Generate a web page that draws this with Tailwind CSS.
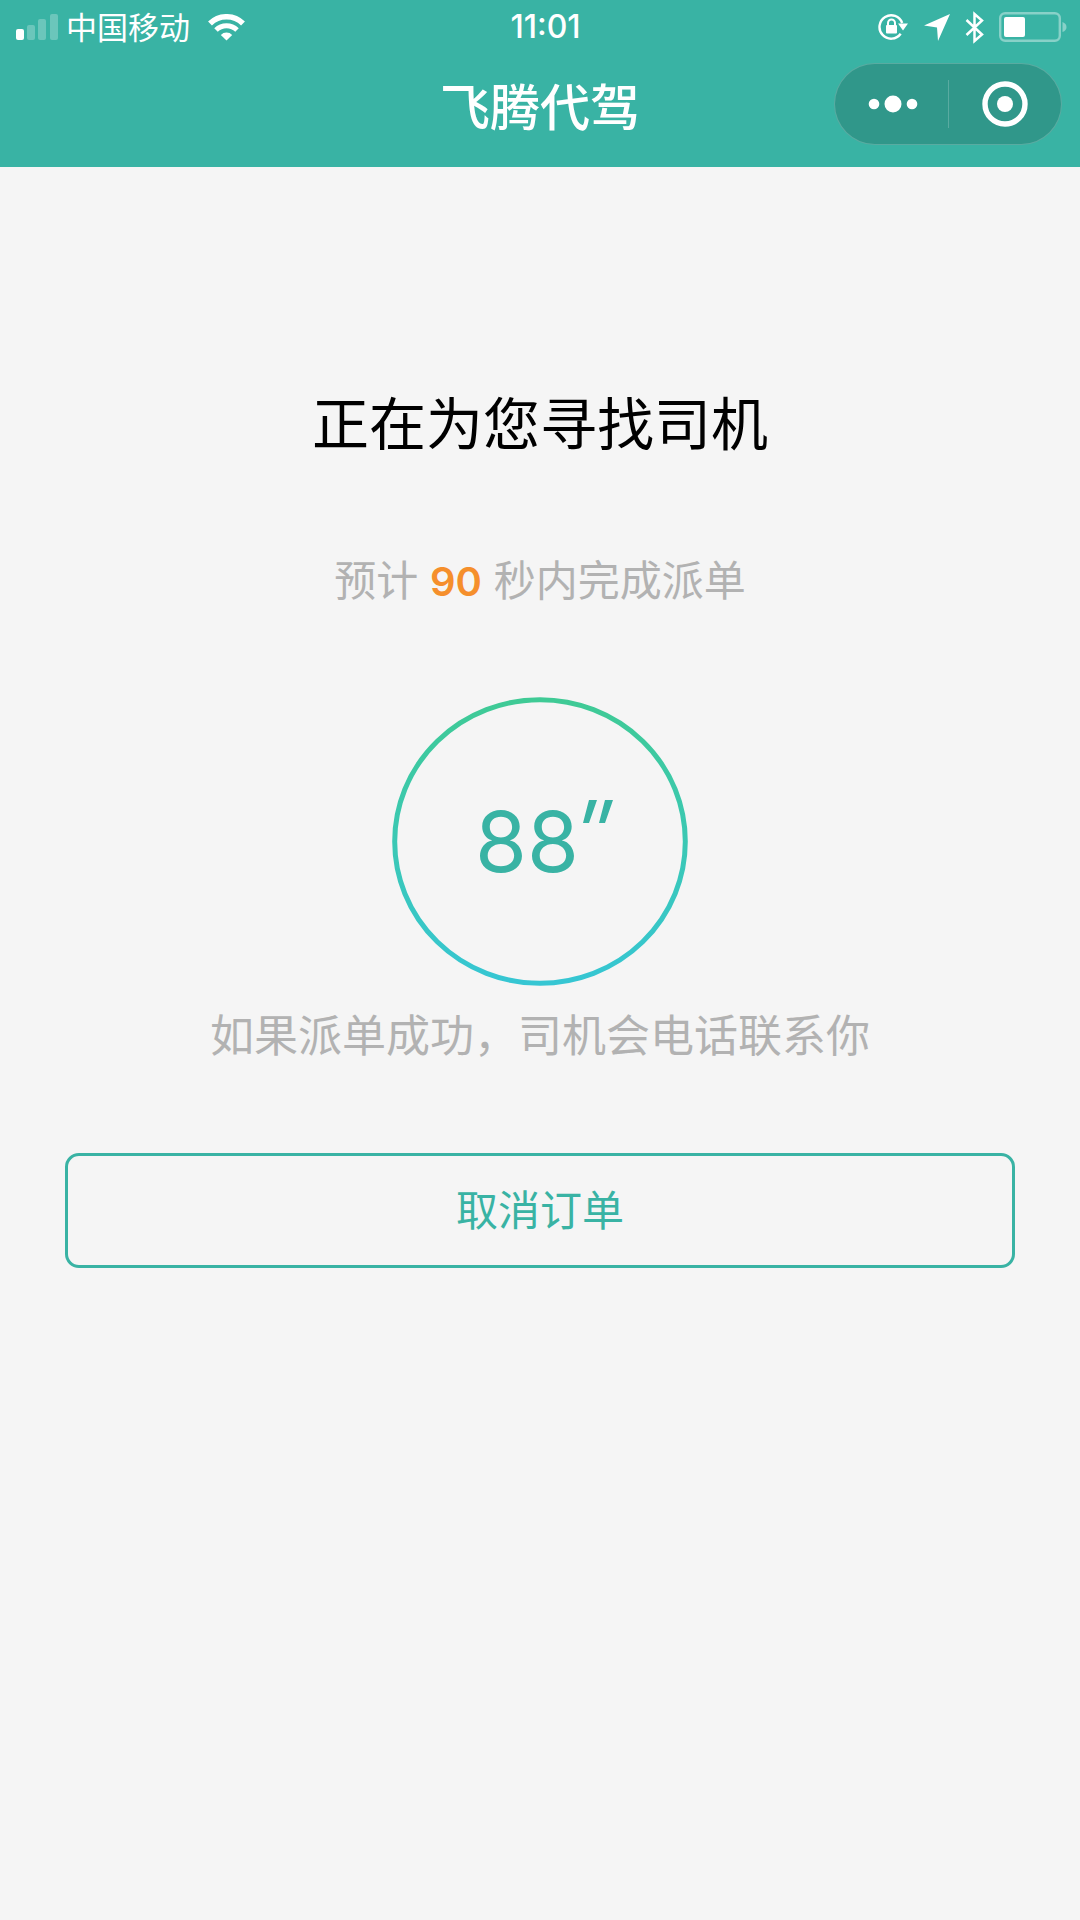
<!DOCTYPE html>
<html lang="zh-CN">
<head>
    <meta charset="UTF-8">
    <meta name="viewport" content="width=device-width, initial-scale=1.0">
    <title>飞腾代驾</title>
    <script src="https://cdn.jsdelivr.net/npm/@tailwindcss/browser@4"></script>
</head>
<body class="min-h-screen bg-[#f5f5f5] font-['Inter','Noto_Sans_CJK_SC',sans-serif]">

    <header class="bg-[#39b3a4] text-white pb-[22px]">
        <!-- Status bar -->
        <div class="grid grid-cols-3 items-center h-[54px] pl-4 pr-[13px]">
            <div class="flex items-center">
                <svg class="w-[42px] h-[26px]" viewBox="0 0 42 26" fill="currentColor" aria-hidden="true">
                    <rect x="0" y="15" width="8" height="11" rx="2"/>
                    <g opacity="0.25">
                        <rect x="11" y="11" width="8" height="15" rx="2"/>
                        <rect x="22" y="5" width="8" height="21" rx="2"/>
                        <rect x="34" y="0" width="8" height="26" rx="2"/>
                    </g>
                </svg>
                <span class="ml-2 pt-[2px] text-[31px] leading-[52px]">中国移动</span>
                <svg class="ml-[18px] w-[37px] h-[27px]" viewBox="0 0 37 27" aria-hidden="true">
                    <path d="M2 9.500a23.500 23.500 0 0 1 33 0" fill="none" stroke="currentColor" stroke-width="5.500"/>
                    <path d="M8 16a15 15 0 0 1 21 0" fill="none" stroke="currentColor" stroke-width="5"/>
                    <path d="M18.500 26.500l-5.700-5.500a8 8 0 0 1 11.400 0z" fill="currentColor"/>
                </svg>
            </div>
            <time class="pl-2 text-center text-[32px] leading-[54px] font-medium">11:01</time>
            <div class="flex items-center justify-end">
                <!-- Rotation lock -->
                <svg class="w-[30px] h-[28px]" viewBox="0 0 30 28" aria-hidden="true">
                    <path d="M22.700 20.800A11.700 11.700 0 1 1 24.200 10" fill="none" stroke="currentColor" stroke-width="2.400"/>
                    <path d="M20 10.500h10l-5 7z" fill="currentColor"/>
                    <rect x="8" y="12" width="11" height="8.500" rx="1" fill="currentColor"/>
                    <path d="M10 12.500V10a3.500 3.500 0 0 1 7 0V12.500" fill="none" stroke="currentColor" stroke-width="2"/>
                </svg>
                <!-- Location -->
                <svg class="ml-4 w-[26px] h-[27px]" viewBox="0 0 26 27" fill="currentColor" aria-hidden="true">
                    <path d="M26 0L14 27L13 13.500L0 11.500z"/>
                </svg>
                <!-- Bluetooth -->
                <svg class="ml-[15px] w-[19px] h-[33px]" viewBox="0 0 19 33" fill="none" stroke="currentColor" stroke-width="2.500" aria-hidden="true">
                    <path d="M1.500 9L17 23.500L9.500 30V3L17 9.500L1.500 24"/>
                </svg>
                <!-- Battery -->
                <svg class="ml-[15px] w-[68px] h-[30px]" viewBox="0 0 68 30" aria-hidden="true">
                    <rect x="1.200" y="1.200" width="59.600" height="27.600" rx="5" fill="none" stroke="currentColor" stroke-width="2.400" opacity="0.4"/>
                    <path d="M63.500 10q4 1.500 4 5t-4 5z" fill="currentColor" opacity="0.4"/>
                    <rect x="5" y="5" width="21" height="20" rx="2" fill="currentColor"/>
                </svg>
            </div>
        </div>

        <!-- Title bar -->
        <div class="grid grid-cols-[1fr_auto_1fr] items-center pt-[9px] pr-[18px] pl-[18px]">
            <h1 class="col-start-2 pt-2 text-[50px] leading-[60px] font-medium">飞腾代驾</h1>
            <div class="flex items-center justify-self-end w-[228px] h-[82px] rounded-full border border-white/20 bg-[#30978a]">
                <button type="button" class="flex-1 flex justify-center" aria-label="更多">
                    <svg class="ml-1 w-[50px] h-[18px]" viewBox="0 0 50 18" fill="currentColor" aria-hidden="true">
                        <circle cx="6" cy="9" r="5.300"/>
                        <circle cx="25" cy="9" r="8.500"/>
                        <circle cx="44" cy="9" r="5.300"/>
                    </svg>
                </button>
                <span class="w-px h-12 bg-white/20"></span>
                <button type="button" class="flex-1 flex justify-center" aria-label="关闭">
                    <svg class="w-[46px] h-[46px]" viewBox="0 0 46 46" aria-hidden="true">
                        <circle cx="23" cy="23" r="20" fill="none" stroke="currentColor" stroke-width="5.400"/>
                        <circle cx="23" cy="23" r="8" fill="currentColor"/>
                    </svg>
                </button>
            </div>
        </div>
    </header>

    <main class="flex flex-col items-center px-[65px] pt-[218px] text-center">
        <h2 class="text-[57px] leading-[80px] text-black">正在为您寻找司机</h2>
        <p class="mt-[86px] text-[42px] leading-[60px] text-[#b2b2b2]">预计 <strong class="font-semibold text-[40px] text-[#f58f2c]">90</strong> 秒内完成派单</p>

        <!-- Countdown -->
        <div class="mt-[85px] grid place-items-center">
            <svg class="col-start-1 row-start-1 w-[296px] h-[289px]" viewBox="0 0 296 289" fill="none" aria-hidden="true">
                <defs>
                    <linearGradient id="ring" x1="0" y1="0" x2="0" y2="1">
                        <stop offset="0" stop-color="#3fca95"/>
                        <stop offset="1" stop-color="#36c6d3"/>
                    </linearGradient>
                </defs>
                <ellipse cx="148" cy="144.500" rx="145.300" ry="141.800" stroke="url(#ring)" stroke-width="5"/>
            </svg>
            <div class="col-start-1 row-start-1 flex items-start pl-2 text-[#39b3a4]">
                <span class="text-[84px] leading-[84px]">88</span>
                <svg class="ml-1 w-[30px] h-[23px]" viewBox="0 0 30 23" fill="currentColor" aria-hidden="true">
                    <path d="M6 0h8L6 23H0zM22 0h8L22 23H16z"/>
                </svg>
            </div>
        </div>

        <p class="mt-[20px] text-[44px] leading-[60px] text-[#b2b2b2]">如果派单成功，司机会电话联系你</p>

        <button type="button" class="mt-[87px] w-full h-[115px] rounded-[14px] border-[3px] border-[#39b3a4] text-[42px] text-[#39b3a4]">取消订单</button>
    </main>

</body>
</html>
